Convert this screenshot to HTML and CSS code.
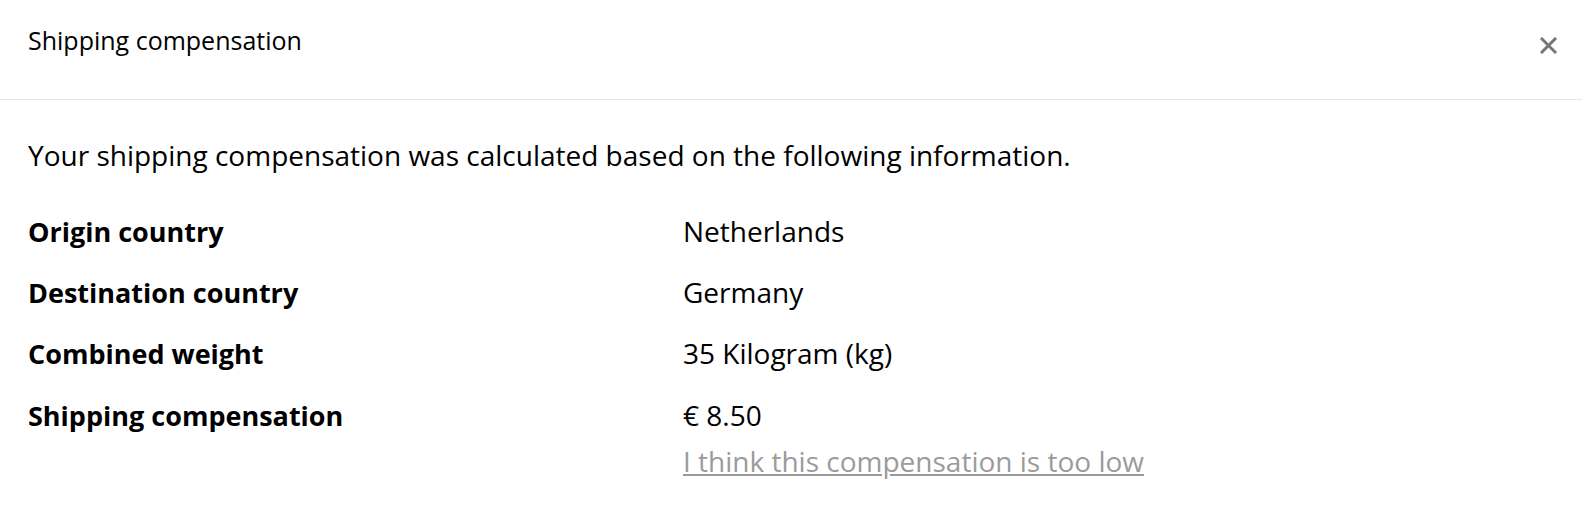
FILE: index.html
```html
<!DOCTYPE html>
<html lang="en">
<head>
    <meta charset="UTF-8">
    <meta name="viewport" content="width=device-width, initial-scale=1.0">
    <title>Shipping compensation</title>
    <link rel="stylesheet" href="styles.css">
</head>
<body>
    <div class="modal">
        <div class="modal-header">
            <h1 class="modal-title">Shipping compensation</h1>
            <button class="modal-close" aria-label="Close">
                <svg width="17" height="17" viewBox="0 0 17 17">
                    <path d="M2 2 L15 15 M15 2 L2 15" stroke="#767676" stroke-width="3" stroke-linecap="square"/>
                </svg>
            </button>
        </div>

        <div class="modal-body">
            <p class="intro">Your shipping compensation was calculated based on the following information.</p>

            <div class="info-grid">
                <div class="info-label">Origin country</div>
                <div class="info-value">Netherlands</div>

                <div class="info-label">Destination country</div>
                <div class="info-value">Germany</div>

                <div class="info-label">Combined weight</div>
                <div class="info-value">35 Kilogram (kg)</div>

                <div class="info-label">Shipping compensation</div>
                <div class="info-value">
                    € 8.50
                    <a href="#" class="too-low">I think this compensation is too low</a>
                </div>
            </div>
        </div>
    </div>
</body>
</html>
```

FILE: styles.css
```css
* {
    box-sizing: border-box;
    margin: 0;
    padding: 0;
}

body {
    font-family: "Open Sans", Lato, sans-serif;
    color: #000;
    background: #fff;
}

.modal-header {
    display: flex;
    justify-content: space-between;
    align-items: flex-start;
    height: 100px;
    padding: 25px 25px 0 28px;
    border-bottom: 1px solid #e6e6e6;
}

.modal-title {
    font-size: 25px;
    font-weight: 400;
    line-height: 30px;
}

.modal-close {
    margin-top: 12px;
    background: none;
    border: none;
    cursor: pointer;
    display: block;
}

.modal-close svg {
    display: block;
}

.modal-body {
    padding: 37px 28px 0 28px;
}

.intro {
    font-size: 28px;
    line-height: 36px;
}

.info-grid {
    display: grid;
    grid-template-columns: 655px 1fr;
    align-items: baseline;
    row-gap: 24.2px;
    margin-top: 40px;
    font-size: 28px;
    line-height: 36px;
}

.info-label {
    font-size: 27px;
    font-weight: 700;
}

.too-low {
    display: block;
    margin-top: 10px;
    color: #9b9b9b;
    text-decoration: underline;
}
```
